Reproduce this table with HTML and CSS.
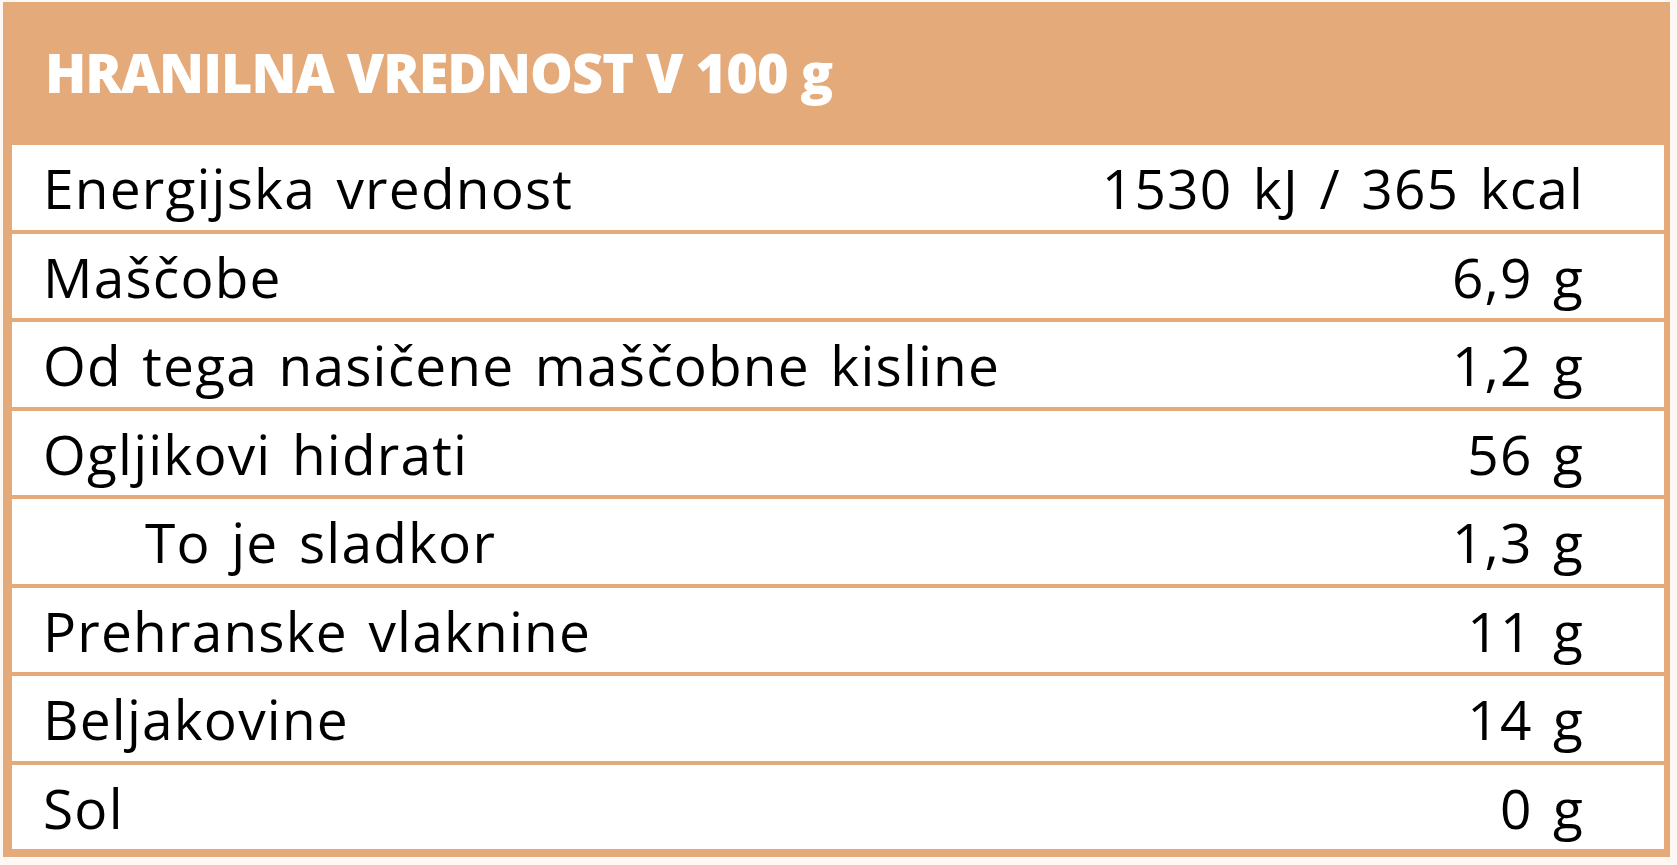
FILE: index.html
```html
<!DOCTYPE html>
<html lang="sl">
<head>
<meta charset="utf-8">
<title>Hranilna vrednost</title>
<link rel="stylesheet" href="styles.css">
</head>
<body>
<div class="panel">
  <div class="head">HRANILNA VREDNOST V 100 g</div>
  <div class="rows">
    <div class="row"><span class="name">Energijska vrednost</span><span class="val">1530 kJ / 365 kcal</span></div>
    <div class="row"><span class="name">Maščobe</span><span class="val">6,9 g</span></div>
    <div class="row"><span class="name">Od tega nasičene maščobne kisline</span><span class="val">1,2 g</span></div>
    <div class="row"><span class="name">Ogljikovi hidrati</span><span class="val">56 g</span></div>
    <div class="row sub"><span class="name">To je sladkor</span><span class="val">1,3 g</span></div>
    <div class="row"><span class="name">Prehranske vlaknine</span><span class="val">11 g</span></div>
    <div class="row"><span class="name">Beljakovine</span><span class="val">14 g</span></div>
    <div class="row"><span class="name">Sol</span><span class="val">0 g</span></div>
  </div>
</div>
</body>
</html>
```
FILE: styles.css
```css
html, body {
  margin: 0;
  padding: 0;
  background: #fdf8f4;
}
body {
  font-family: "Open Sans", "Liberation Sans", sans-serif;
  color: #000;
  padding: 2px 7px 4px 3px;
}
.panel {
  background: #e5aa7a;
  padding: 0 6px 8px 9px;
}
.head {
  height: 143px;
  box-sizing: border-box;
  padding: 44px 0 0 33px;
  font-size: 54px;
  line-height: 53px;
  font-weight: 800;
  letter-spacing: -1px;
  color: #fff;
  white-space: nowrap;
}
.rows {
  display: flex;
  flex-direction: column;
  gap: 4px;
}
.row {
  background: #fff;
  height: 84.5px;
  display: flex;
  justify-content: space-between;
  padding: 0 81px 0 31px;
  font-size: 55px;
  line-height: 85px;
  letter-spacing: 1.2px;
  word-spacing: 5px;
  white-space: nowrap;
}
.val {
  margin-right: -1.2px;
}
.row.sub {
  padding-left: 133px;
}
```
